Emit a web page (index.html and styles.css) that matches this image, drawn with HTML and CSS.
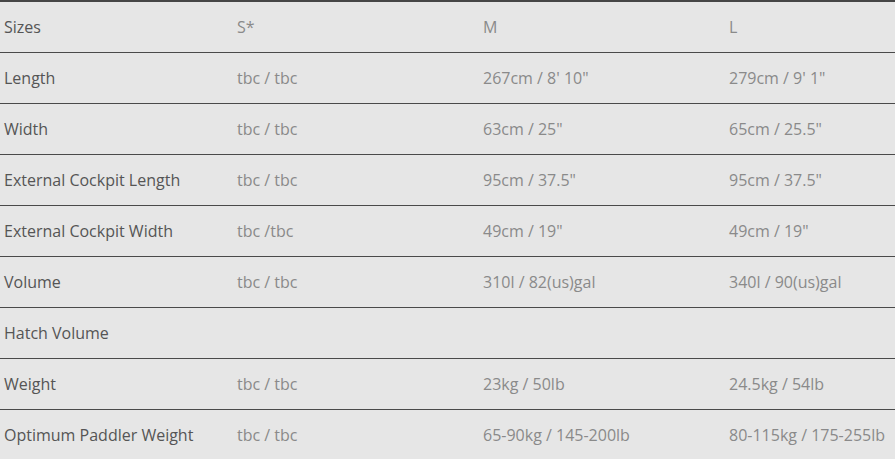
FILE: index.html
```html
<!DOCTYPE html>
<html>
<head>
<meta charset="utf-8">
<link rel="stylesheet" href="styles.css">
</head>
<body>
<table class="specs">
  <colgroup>
    <col class="c1"><col class="c2"><col class="c3"><col class="c4">
  </colgroup>
  <tbody>
    <tr><th>Sizes</th><td>S*</td><td>M</td><td>L</td></tr>
    <tr><th>Length</th><td>tbc / tbc</td><td>267cm / 8' 10"</td><td>279cm / 9' 1"</td></tr>
    <tr><th>Width</th><td>tbc / tbc</td><td>63cm / 25"</td><td>65cm / 25.5"</td></tr>
    <tr><th>External Cockpit Length</th><td>tbc / tbc</td><td>95cm / 37.5"</td><td>95cm / 37.5"</td></tr>
    <tr><th>External Cockpit Width</th><td>tbc /tbc</td><td>49cm / 19"</td><td>49cm / 19"</td></tr>
    <tr><th>Volume</th><td>tbc / tbc</td><td>310l / 82(us)gal</td><td>340l / 90(us)gal</td></tr>
    <tr><th>Hatch Volume</th><td></td><td></td><td></td></tr>
    <tr><th>Weight</th><td>tbc / tbc</td><td>23kg / 50lb</td><td>24.5kg / 54lb</td></tr>
    <tr><th>Optimum Paddler Weight</th><td>tbc / tbc</td><td>65-90kg / 145-200lb</td><td>80-115kg / 175-255lb</td></tr>
  </tbody>
</table>
</body>
</html>
```
FILE: styles.css
```css
html, body {
  margin: 0;
  padding: 0;
  background: #e6e6e6;
}
.specs {
  width: 895px;
  border-collapse: collapse;
  table-layout: fixed;
  border-top: 2px solid #464646;
  font-family: "Open Sans", sans-serif;
  font-size: 16px;
}
.c1 { width: 233px; }
.c2 { width: 246px; }
.c3 { width: 246px; }
.c4 { width: 170px; }
.specs tr { border-bottom: 1px solid #4a4a4a; }
.specs th, .specs td {
  height: 49px;
  padding: 0 4px 1px;
  text-align: left;
  font-weight: 400;
  vertical-align: middle;
  white-space: nowrap;
}
.specs th { color: #555555; }
.specs td { color: #8a8a8a; }
```
